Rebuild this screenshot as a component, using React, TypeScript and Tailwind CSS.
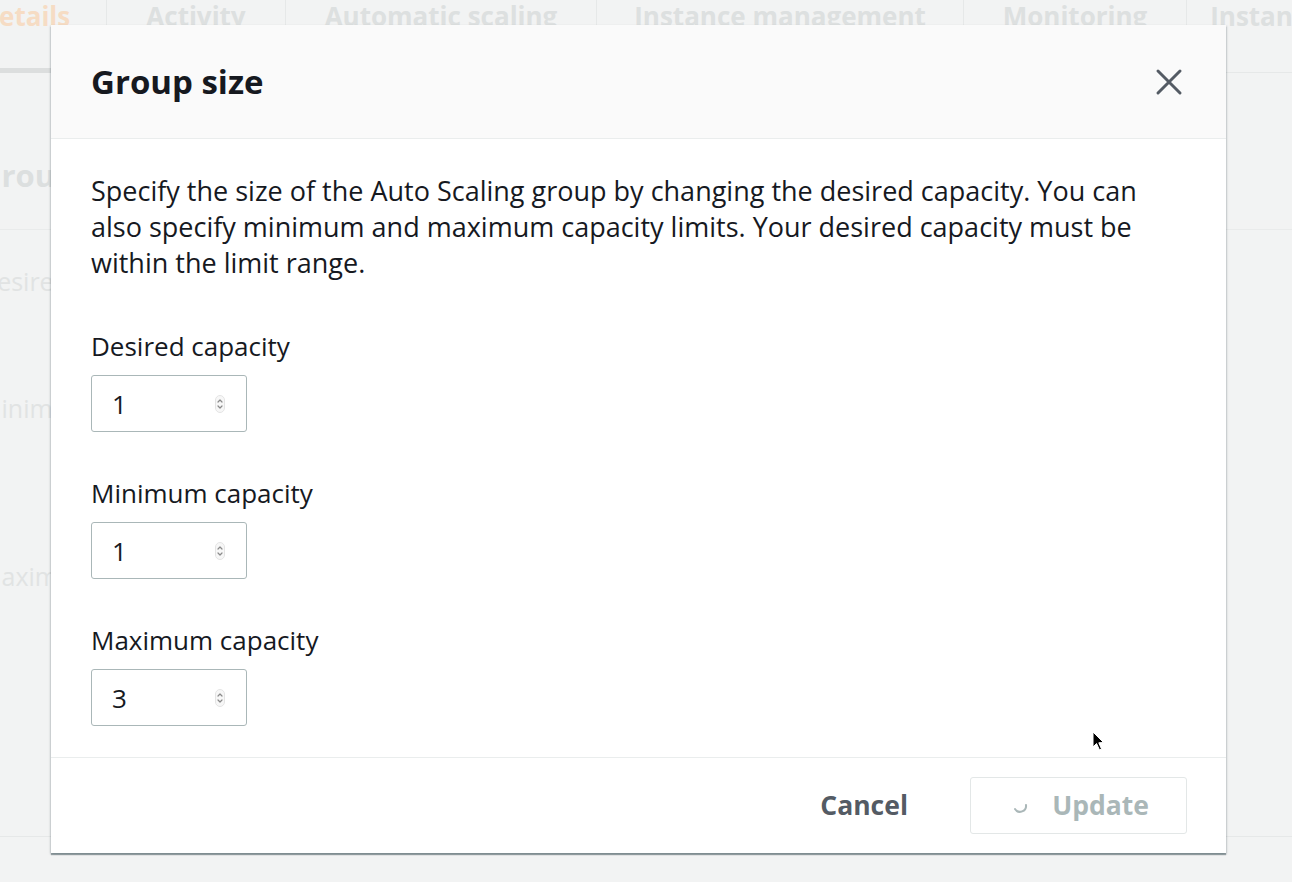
import React from 'react';

const font = { fontFamily: '"Open Sans", "Noto Sans", Arial, sans-serif' };

const tabs = [
  { label: 'Details', w: 'w-[162px]', active: true },
  { label: 'Activity', w: 'w-[179px]' },
  { label: 'Automatic scaling', w: 'w-[311px]' },
  { label: 'Instance management', w: 'w-[367px]' },
  { label: 'Monitoring', w: 'w-[223px]' },
  { label: 'Instance refresh', w: 'w-[260px]' },
];

const fields = [
  { label: 'Desired capacity', value: '1' },
  { label: 'Minimum capacity', value: '1' },
  { label: 'Maximum capacity', value: '3' },
];

function Spinner() {
  return (
    <svg width="10" height="18" viewBox="0 0 10 18" className="shrink-0">
      <rect x="0.5" y="0.5" width="9" height="17" rx="4.5" fill="#f7f7f7" stroke="#e4e4e4" />
      <path d="M3 7 L5 5 L7 7" fill="none" stroke="#8a8a8a" strokeWidth="1.2" strokeLinecap="round" strokeLinejoin="round" />
      <path d="M3 11 L5 13 L7 11" fill="none" stroke="#8a8a8a" strokeWidth="1.2" strokeLinecap="round" strokeLinejoin="round" />
    </svg>
  );
}

function NumberField({ label, value }: { label: string; value: string }) {
  return (
    <div className="flex flex-col">
      <label className="text-[26px] leading-[36px] text-[#16191f]">{label}</label>
      <div className="mt-[11px] flex h-[57px] w-[156px] items-center justify-between rounded-[3px] border border-[#aab7b8] bg-white pl-[20px] pr-[21px]">
        <span className="text-[26px] leading-[36px] text-[#16191f]">{value}</span>
        <Spinner />
      </div>
    </div>
  );
}

function BackgroundPage() {
  return (
    <div className="h-[882px] w-full overflow-hidden bg-[#f2f3f3]">
      <div className="flex h-[73px] border-b border-[#e6e8e8]">
        <div className="-ml-[56px] flex">
          {tabs.map((t, i) => (
            <div
              key={t.label}
              className={`relative flex shrink-0 justify-center ${t.w} ${i > 0 ? 'border-l border-[#e6e8e8]' : ''}`}
            >
              <span
                className={`-mt-[2px] whitespace-nowrap text-[26px] font-bold leading-[36px] ${t.active ? 'text-[#f6dcc4]' : 'text-[#dde0e0]'}`}
              >
                {t.label}
              </span>
              {t.active && <div className="absolute bottom-[-1px] left-0 right-0 h-[5px] bg-[#dcdede]" />}
            </div>
          ))}
        </div>
      </div>
      <div className="-ml-[21px]">
        <div className="flex h-[157px] items-start border-b border-[#e9ebeb] pt-[81px]">
          <span className="text-[31px] font-bold leading-[42px] text-[#dcdfdf]">Group size</span>
        </div>
        <div className="flex flex-col">
          <span className="mt-[33px] text-[25px] leading-[36px] text-[#e1e3e3]">Desired capacity</span>
          <span className="mt-[91px] text-[25px] leading-[36px] text-[#e1e3e3]">Minimum capacity</span>
          <span className="mt-[132px] text-[25px] leading-[36px] text-[#e1e3e3]">Maximum capacity</span>
        </div>
      </div>
      <div className="mt-[242px] border-b border-[#e6e8e8]" />
    </div>
  );
}

function LoadingIcon() {
  return (
    <svg width="16" height="16" viewBox="0 0 16 16" className="shrink-0">
      <path d="M14 7 A6 6 0 0 1 3 11" fill="none" stroke="#aab7b8" strokeWidth="2" strokeLinecap="round" />
    </svg>
  );
}

export default function App() {
  return (
    <div className="relative h-[882px] w-[1292px] overflow-hidden" style={font}>
      <BackgroundPage />

      <div className="absolute left-[51px] top-[25px] flex h-[828px] w-[1175px] flex-col bg-white shadow-[0_2px_1px_0_rgba(0,28,36,0.35),1px_1px_2px_0_rgba(0,28,36,0.15),-1px_1px_2px_0_rgba(0,28,36,0.15)]">
        <div className="flex h-[114px] shrink-0 items-center justify-between border-b border-[#eaeded] bg-[#fafafa] pl-[40px] pr-[43px]">
          <h2 className="text-[33px] font-bold text-[#16191f]">Group size</h2>
          <svg width="28" height="28" viewBox="0 0 28 28">
            <path d="M3 3 L25 25 M25 3 L3 25" stroke="#545b64" strokeWidth="3" strokeLinecap="round" />
          </svg>
        </div>

        <div className="flex flex-1 flex-col px-[40px] pt-[34px]">
          <p className="whitespace-nowrap text-[27px] leading-[36px] text-[#16191f]">
            Specify the size of the Auto Scaling group by changing the desired capacity. You can
            <br />
            also specify minimum and maximum capacity limits. Your desired capacity must be
            <br />
            within the limit range.
          </p>
          <div className="mt-[47px] flex flex-col gap-[43px]">
            {fields.map((f) => (
              <NumberField key={f.label} label={f.label} value={f.value} />
            ))}
          </div>
        </div>

        <div className="flex h-[96px] shrink-0 items-center justify-end gap-[40px] border-t border-[#eaeded] pl-[40px] pr-[39px]">
          <button className="px-[22px] text-[26.5px] font-bold text-[#545b64]">Cancel</button>
          <button className="flex h-[57px] w-[217px] items-center justify-center gap-[24px] rounded-[3px] border border-[#e3e7e7] bg-white pl-[4px] text-[26.5px] font-bold text-[#aab7b8]">
            <LoadingIcon />
            Update
          </button>
        </div>
      </div>

      <svg className="absolute left-[1092px] top-[731px]" width="14" height="22" viewBox="0 0 14 22">
        <path d="M1 1 L1 16 L4.5 12.5 L7.5 19 L9.5 18 L6.8 11.8 L11.5 11.5 Z" fill="#000" stroke="#fff" strokeWidth="1" />
      </svg>
    </div>
  );
}
